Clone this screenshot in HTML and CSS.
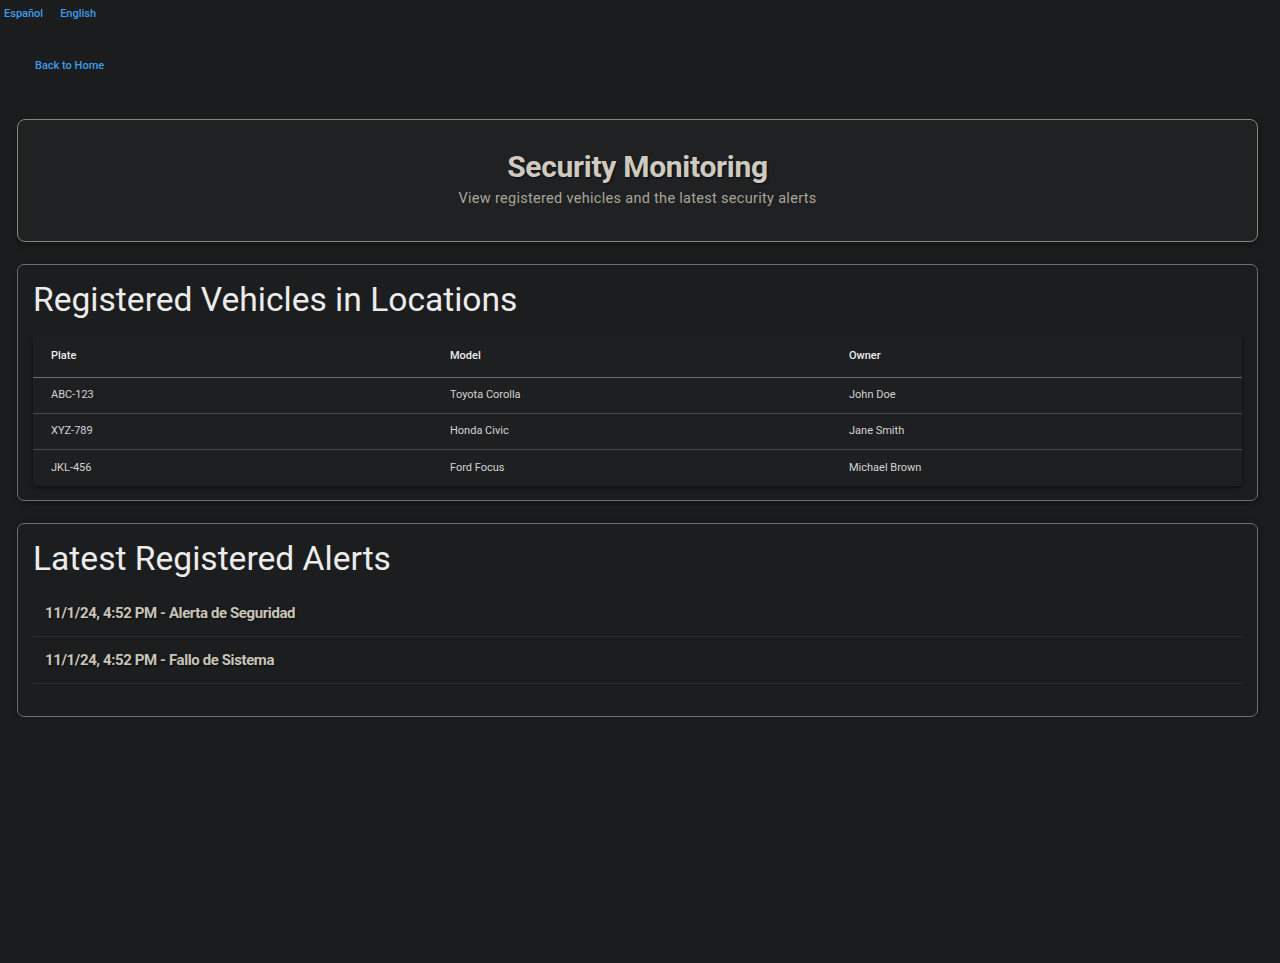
FILE: index.html
```html
<!DOCTYPE html>
<html lang="en">
<head>
<meta charset="utf-8">
<title>Security Monitoring</title>
<link rel="stylesheet" href="styles.css">
</head>
<body>
<nav class="lang-bar">
  <a class="link lang" href="#">Español</a>
  <a class="link lang" href="#">English</a>
</nav>
<div class="back-row">
  <a class="link back" href="#">Back to Home</a>
</div>
<main class="page">
  <section class="card hero">
    <h1 class="hero-title">Security Monitoring</h1>
    <p class="hero-sub">View registered vehicles and the latest security alerts</p>
  </section>

  <section class="card">
    <h2 class="card-title">Registered Vehicles in Locations</h2>
    <div class="table">
      <div class="row head">
        <div class="cell">Plate</div>
        <div class="cell">Model</div>
        <div class="cell">Owner</div>
      </div>
      <div class="row">
        <div class="cell">ABC-123</div>
        <div class="cell">Toyota Corolla</div>
        <div class="cell">John Doe</div>
      </div>
      <div class="row">
        <div class="cell">XYZ-789</div>
        <div class="cell">Honda Civic</div>
        <div class="cell">Jane Smith</div>
      </div>
      <div class="row last">
        <div class="cell">JKL-456</div>
        <div class="cell">Ford Focus</div>
        <div class="cell">Michael Brown</div>
      </div>
    </div>
  </section>

  <section class="card alerts-card">
    <h2 class="card-title">Latest Registered Alerts</h2>
    <ul class="alerts">
      <li class="alert">11/1/24, 4:52 PM - Alerta de Seguridad</li>
      <li class="alert">11/1/24, 4:52 PM - Fallo de Sistema</li>
    </ul>
  </section>
</main>
</body>
</html>
```

FILE: styles.css
```css
html, body {
  margin: 0;
  padding: 0;
  background: #1b1c1e;
  font-family: Roboto, "Noto Sans", "Liberation Sans", sans-serif;
  color: #e6e6e6;
  min-height: 100%;
}

.link {
  color: #3f9ceb;
  text-decoration: none;
  font-size: 11px;
  font-weight: 500;
}

.lang-bar {
  display: flex;
  gap: 17px;
  padding: 7px 4px 0;
  height: 20px;
}

.back-row {
  padding: 27px 35px 0;
  height: 65px;
}

.page {
  width: 1241px;
  margin-left: 17px;
  display: flex;
  flex-direction: column;
  gap: 22px;
}

.card {
  background: #1c1d1f;
  border: 1px solid #6e6e6c;
  border-radius: 7px;
  padding: 14px 15px 14px;
  box-shadow: 0 2px 6px rgba(0, 0, 0, 0.35);
}

.hero {
  background: #202123;
  border-color: #8a8778;
  border-radius: 8px;
  padding: 29px 16px 30px;
  text-align: center;
}

.hero-title {
  margin: 0;
  font-size: 30px;
  line-height: 36px;
  font-weight: 700;
  color: #cfcac0;
  letter-spacing: -0.3px;
  text-shadow: 1px 1px 2px rgba(0, 0, 0, 0.6);
}

.hero-sub {
  margin: 2px 0 0;
  font-size: 14.5px;
  line-height: 24px;
  color: #aaa599;
  letter-spacing: 0.3px;
}

.card-title {
  margin: 0 0 14px;
  font-size: 33.6px;
  line-height: 42px;
  font-weight: 400;
  color: #ececec;
}

.table {
  background: #1e1f21;
  border-radius: 4px;
  box-shadow: 0 2px 4px rgba(0, 0, 0, 0.45);
}

.row {
  display: grid;
  grid-template-columns: 399px 399px 1fr;
  height: 35px;
  align-items: center;
  border-bottom: 1px solid #4a4a48;
  font-size: 11px;
  color: #d4d4d4;
}

.row.head {
  height: 42px;
  border-bottom-color: #6c6b64;
  font-weight: 500;
  color: #ededed;
}

.row.last {
  border-bottom: none;
  height: 36px;
}

.cell {
  padding-left: 18px;
  padding-bottom: 2px;
}

.alerts-card {
  padding-bottom: 24px;
}

.alerts-card .card-title {
  margin-bottom: 3px;
}

.alerts {
  list-style: none;
  margin: 0;
  padding: 7px 0 8px;
}

.alert {
  height: 46px;
  display: flex;
  align-items: center;
  padding-left: 12px;
  border-bottom: 1px solid #2c2d2f;
  font-size: 15px;
  font-weight: 700;
  letter-spacing: -0.4px;
  color: #c9c4b8;
  text-shadow: 1px 1px 2px rgba(0, 0, 0, 0.6);
}
```
